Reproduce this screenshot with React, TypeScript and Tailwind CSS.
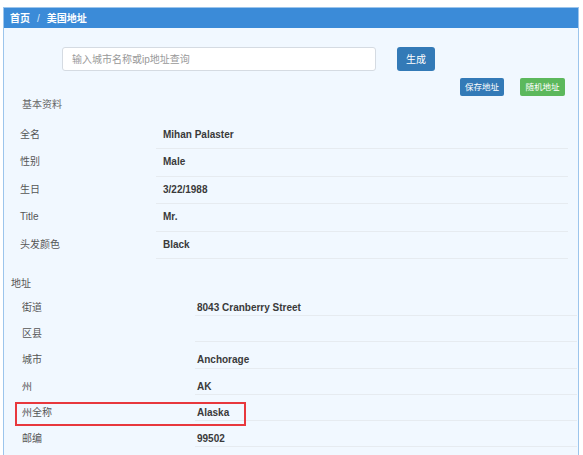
import React from 'react';

const font = { fontFamily: '"Liberation Sans", "Noto Sans CJK SC", Arial, sans-serif' };

const basic = [
  ['全名', 'Mihan Palaster'],
  ['性别', 'Male'],
  ['生日', '3/22/1988'],
  ['Title', 'Mr.'],
  ['头发颜色', 'Black'],
];

const address = [
  ['街道', '8043 Cranberry Street'],
  ['区县', ''],
  ['城市', 'Anchorage'],
  ['州', 'AK'],
  ['州全称', 'Alaska'],
  ['邮编', '99502'],
];

function BasicRow({ label, value }: { label: string; value: string }) {
  return (
    <div className="flex h-[27.5px]">
      <div className="w-[152px] shrink-0 pl-4 pt-[7px] text-[10px] leading-[12px] text-[#555]">{label}</div>
      <div className="flex-1 border-b border-[#e6ebf0] pl-[7px] pt-[7px] text-[10px] leading-[12px] font-bold text-[#3a3a3a]">
        {value}
      </div>
    </div>
  );
}

function AddressRow({ label, value, marked }: { label: string; value: string; marked?: boolean }) {
  return (
    <div className="relative flex h-[26.2px]">
      <div className="w-[191px] shrink-0 pl-[18px] pt-[12px] text-[10px] leading-[12px] text-[#555]">{label}</div>
      <div className="flex-1 border-b border-[#e6ebf0] pl-[2px] pt-[12px] text-[10px] leading-[12px] font-bold text-[#3a3a3a]">
        {value}
      </div>
      {marked && (
        <div className="absolute left-[11px] top-[7px] h-[24px] w-[231px] border-2 border-[#e8383d]" />
      )}
    </div>
  );
}

export default function App() {
  return (
    <div className="h-[455px] overflow-hidden bg-white pl-[3px] pr-[4px] pt-[7px]" style={font}>
      <div className="h-[470px] border border-[#9cc5ec] bg-[#f1f8ff]">
        <div className="flex h-[20px] items-center bg-[#3b8bd8] pl-[6px] text-[10px] font-bold text-white">
          <span>首页</span>
          <span className="px-[7px] font-normal text-[#dceafa]">/</span>
          <span>美国地址</span>
        </div>

        <div className="flex items-center pl-[58px] pt-[19px]">
          <div className="flex h-[24px] w-[314px] items-center rounded-[3px] border border-[#d5dbe2] bg-white pl-[9px] text-[10px] text-[#999]">
            输入城市名称或ip地址查询
          </div>
          <button className="ml-[21px] flex h-[24px] w-[38px] items-center justify-center rounded-[3px] bg-[#337ab7] text-[10px] text-white">
            生成
          </button>
        </div>

        <div className="mt-[7px] flex justify-end gap-[16px] pr-[13px]">
          <button className="flex h-[18px] w-[44px] items-center justify-center rounded-[2px] bg-[#337ab7] text-[8.5px] text-white">
            保存地址
          </button>
          <button className="flex h-[18px] w-[45px] items-center justify-center rounded-[2px] bg-[#5cb85c] text-[8.5px] text-white">
            随机地址
          </button>
        </div>

        <div className="mt-[3px] pl-[18px] text-[10px] leading-[12px] text-[#666]">基本资料</div>

        <div className="mt-[10.5px] pr-[10px]">
          {basic.map(([l, v]) => (
            <BasicRow key={l} label={l} value={v} />
          ))}
        </div>

        <div className="mt-[19px] pl-[7px] text-[10px] leading-[12px] text-[#555]">地址</div>

        <div className="pr-[1px]">
          {address.map(([l, v]) => (
            <AddressRow key={l} label={l} value={v} marked={l === '州全称'} />
          ))}
        </div>
      </div>
    </div>
  );
}
